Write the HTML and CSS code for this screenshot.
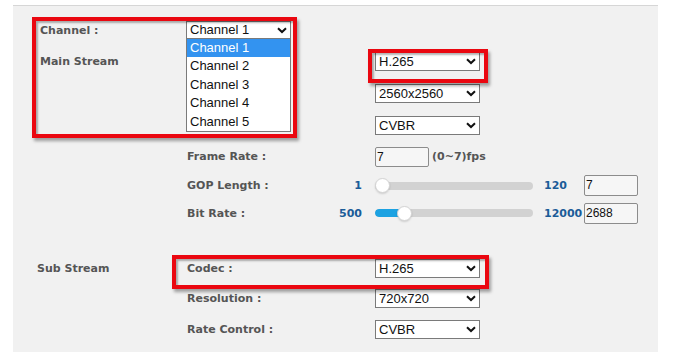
FILE: index.html
```html
<!DOCTYPE html>
<html>
<head>
    <title>Video Stream Settings</title>
    <link rel="stylesheet" href="styles.css">
</head>
<body>
<div class="page">
    <div class="panel">
        <div class="form">
            <div class="label col1">Channel :</div>
            <div class="col2 select-wrap">
                <div class="select">Channel 1
                    <svg class="chev" width="10" height="7" viewBox="0 0 10 7"><polyline points="1,1.2 5,5 9,1.2" fill="none" stroke="#111" stroke-width="2"/></svg>
                </div>
                <div class="options">
                    <div class="option selected">Channel 1</div>
                    <div class="option">Channel 2</div>
                    <div class="option">Channel 3</div>
                    <div class="option">Channel 4</div>
                    <div class="option">Channel 5</div>
                </div>
            </div>

            <div class="label col1">Main Stream</div>
            <div class="col4 select">H.265
                <svg class="chev" width="10" height="7" viewBox="0 0 10 7"><polyline points="1,1.2 5,5 9,1.2" fill="none" stroke="#111" stroke-width="2"/></svg>
            </div>
            <div class="col4 select">2560x2560
                <svg class="chev" width="10" height="7" viewBox="0 0 10 7"><polyline points="1,1.2 5,5 9,1.2" fill="none" stroke="#111" stroke-width="2"/></svg>
            </div>
            <div class="col4 select">CVBR
                <svg class="chev" width="10" height="7" viewBox="0 0 10 7"><polyline points="1,1.2 5,5 9,1.2" fill="none" stroke="#111" stroke-width="2"/></svg>
            </div>

            <div class="label col2">Frame Rate :</div>
            <div class="col4 inline">
                <div class="input small">7</div>
                <span class="label unit">(0~7)fps</span>
            </div>

            <div class="label col2">GOP Length :</div>
            <div class="col3 num min">1</div>
            <div class="col4 slider">
                <div class="track"></div>
                <div class="knob" style="left: 0px"></div>
            </div>
            <div class="col5 num max">120</div>
            <div class="col6 input">7</div>

            <div class="label col2">Bit Rate :</div>
            <div class="col3 num min">500</div>
            <div class="col4 slider">
                <div class="track"><div class="fill" style="width: 30px"></div></div>
                <div class="knob" style="left: 22px"></div>
            </div>
            <div class="col5 num max">12000</div>
            <div class="col6 input">2688</div>

            <div class="spacer"></div>

            <div class="label col1 sub">Sub Stream</div>
            <div class="label col2">Codec :</div>
            <div class="col4 select">H.265
                <svg class="chev" width="10" height="7" viewBox="0 0 10 7"><polyline points="1,1.2 5,5 9,1.2" fill="none" stroke="#111" stroke-width="2"/></svg>
            </div>

            <div class="label col2">Resolution :</div>
            <div class="col4 select">720x720
                <svg class="chev" width="10" height="7" viewBox="0 0 10 7"><polyline points="1,1.2 5,5 9,1.2" fill="none" stroke="#111" stroke-width="2"/></svg>
            </div>

            <div class="label col2">Rate Control :</div>
            <div class="col4 select">CVBR
                <svg class="chev" width="10" height="7" viewBox="0 0 10 7"><polyline points="1,1.2 5,5 9,1.2" fill="none" stroke="#111" stroke-width="2"/></svg>
            </div>
        </div>
    </div>

    <!-- annotation boxes drawn over the screenshot -->
    <div class="mark mark-channel"></div>
    <div class="mark mark-codec"></div>
    <div class="mark mark-subcodec"></div>
</div>
</body>
</html>
```

FILE: styles.css
```css
body {
    margin: 0;
    background: #fff;
    font-family: "Liberation Sans", Arial, sans-serif;
}
.page {
    position: relative;
    width: 675px;
    height: 361px;
}
.panel {
    margin: 5px 0 0 13px;
    width: 645px;
    height: 347px;
    box-sizing: border-box;
    border-top: 1px solid #d6d6d6;
    background: #f1f1f1;
}
.form {
    display: grid;
    grid-template-columns: 147px 148px 40px 158px 51px 54px;
    grid-template-rows: 30px 33px 31px 32px 31px 27px 28px 25px 32px 28px 34px;
    align-items: center;
    padding: 9px 0 0 27px;
}
.col1 { grid-column: 1; }
.col2 { grid-column: 2; }
.col3 { grid-column: 3; }
.col4 { grid-column: 4 / span 3; }
.col5 { grid-column: 5; }
.col6 { grid-column: 6; }
.slider.col4 { grid-column: 4; }
.spacer {
    grid-column: 1 / -1;
}
.label {
    font-family: "DejaVu Sans", Verdana, sans-serif;
    font-weight: bold;
    font-size: 11px;
    color: #555;
    white-space: nowrap;
}
.sub {
    margin-left: -3px;
}
.select-wrap {
    position: relative;
    justify-self: start;
    margin-left: -1px;
}
.select {
    position: relative;
    justify-self: start;
    width: 105px;
    height: 19px;
    box-sizing: border-box;
    border: 1px solid #7a7a7a;
    background: #fff;
    font-size: 13px;
    line-height: 17px;
    color: #111;
    padding-left: 3px;
}
.select-wrap .select {
    width: 105px;
    height: 18px;
    line-height: 16px;
}
.chev {
    position: absolute;
    right: 3px;
    top: 5px;
}
.options {
    position: absolute;
    top: 18px;
    left: 0;
    width: 105px;
    box-sizing: border-box;
    border: 1px solid #7a7a7a;
    border-top: none;
    background: #fff;
}
.option {
    height: 18.4px;
    line-height: 18px;
    padding-left: 3px;
    font-size: 13px;
    color: #111;
}
.option.selected {
    background: #3393f0;
    color: #fff;
}
.inline {
    display: flex;
    align-items: center;
    gap: 3px;
}
.input {
    width: 54px;
    height: 21px;
    box-sizing: border-box;
    border: 1px solid #8c8c8c;
    border-radius: 2px;
    background: #f6f6f6;
    font-size: 12px;
    line-height: 19px;
    color: #111;
    padding-left: 1px;
}
.input.small {
    height: 20px;
    line-height: 18px;
}
.num {
    font-family: "DejaVu Sans", Verdana, sans-serif;
    font-weight: bold;
    font-size: 11px;
    color: #1b5c98;
}
.min {
    text-align: right;
    padding-right: 13px;
}
.max {
    padding-left: 11px;
    white-space: nowrap;
}
.slider {
    position: relative;
    height: 15px;
    display: flex;
    align-items: center;
}
.track {
    width: 100%;
    height: 8px;
    border-radius: 4px;
    background: #d2d2d2;
    overflow: hidden;
}
.fill {
    height: 100%;
    background: #1ca2e2;
    border-radius: 4px;
}
.knob {
    position: absolute;
    top: 0;
    width: 15px;
    height: 15px;
    box-sizing: border-box;
    border-radius: 50%;
    background: #fff;
    border: 1px solid #d4d4d4;
    box-shadow: 0 1px 2px rgba(0, 0, 0, 0.15);
}
.mark {
    position: absolute;
    box-sizing: border-box;
    border: 4px solid #ea0710;
    box-shadow: 2px 3px 3px rgba(0, 0, 0, 0.35), inset 2px 2px 2px rgba(0, 0, 0, 0.3);
}
.mark-channel {
    left: 32px;
    top: 12px;
    width: 265px;
    height: 121px;
}
.mark-codec {
    left: 368px;
    top: 44px;
    width: 120px;
    height: 34px;
}
.mark-subcodec {
    left: 172px;
    top: 250px;
    width: 317px;
    height: 34px;
}
```
